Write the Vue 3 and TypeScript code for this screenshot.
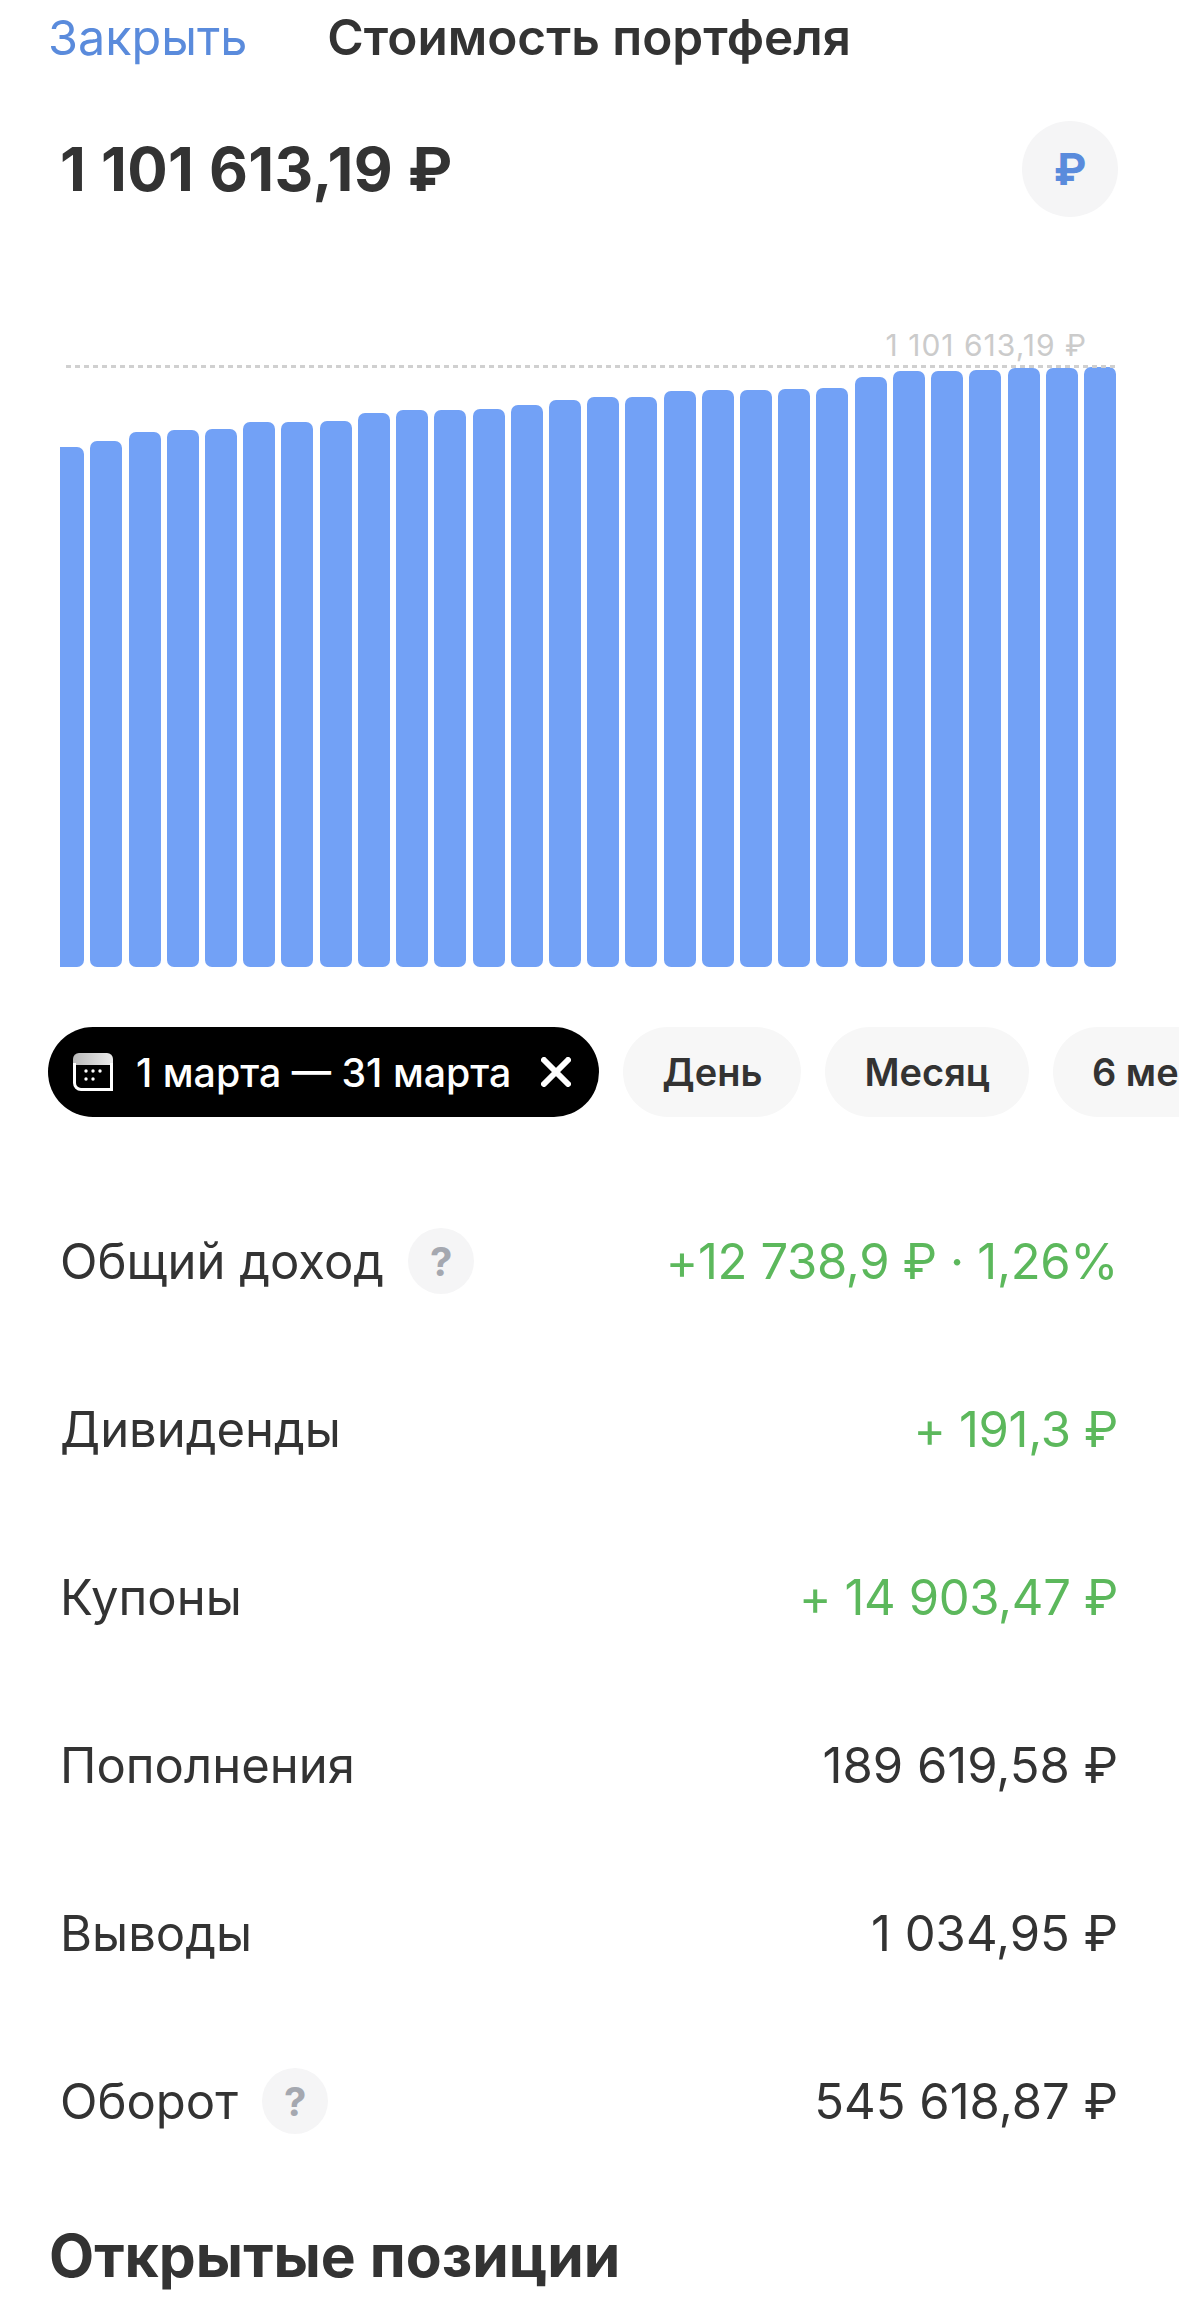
<script setup lang="ts">
type Row = { label: string; value: string; help?: boolean; positive?: boolean }

const CHART_BOTTOM = 967

// top edge of each bar, read off the chart
const barTops = [
  447, 441, 432, 430, 429, 422, 422, 421, 413, 410, 410, 409, 405, 400,
  397, 397, 391, 390, 390, 389, 388, 377, 371, 371, 370, 368, 368, 367,
]
const bars = barTops.map((top) => CHART_BOTTOM - top)

const rows: Row[] = [
  { label: 'Общий доход', value: '+12 738,9 ₽ · 1,26%', help: true, positive: true },
  { label: 'Дивиденды', value: '+ 191,3 ₽', positive: true },
  { label: 'Купоны', value: '+ 14 903,47 ₽', positive: true },
  { label: 'Пополнения', value: '189 619,58 ₽' },
  { label: 'Выводы', value: '1 034,95 ₽' },
  { label: 'Оборот', value: '545 618,87 ₽', help: true },
]

const periods = ['День', 'Месяц', '6 месяцев']
</script>

<template>
  <div class="page">
    <header class="topbar">
      <span class="close">Закрыть</span>
      <span class="title">Стоимость портфеля</span>
    </header>

    <div class="total">
      <span class="total-value">1 101 613,19 ₽</span>
      <span class="currency">₽</span>
    </div>

    <section class="chart">
      <div class="chart-label">1 101 613,19 ₽</div>
      <div class="chart-plot">
        <div class="chart-line"></div>
        <div class="bars">
          <div v-for="(h, i) in bars" :key="i" class="bar" :style="{ height: h + 'px' }"></div>
        </div>
      </div>
    </section>

    <div class="pills">
      <div class="pill pill-active">
        <svg class="cal" width="40" height="38" viewBox="0 0 40 38" fill="none">
          <defs>
            <linearGradient id="calTop" x1="0" y1="0" x2="1" y2="0">
              <stop offset="0" stop-color="#b9b9b9" />
              <stop offset="1" stop-color="#ececec" />
            </linearGradient>
          </defs>
          <path d="M6 0h28a6 6 0 0 1 6 6v6H0V6a6 6 0 0 1 6-6z" fill="url(#calTop)" />
          <path d="M1.5 10v20a6.5 6.5 0 0 0 6.5 6.5h30.5V10" stroke="#fff" stroke-width="3" />
          <g fill="#fff">
            <circle cx="13" cy="18" r="1.7" />
            <circle cx="20" cy="18" r="1.7" />
            <circle cx="27" cy="18" r="1.7" />
            <circle cx="13" cy="26" r="1.7" />
            <circle cx="20" cy="26" r="1.7" />
          </g>
        </svg>
        <span>1 марта — 31 марта</span>
        <svg class="cross" width="30" height="30" viewBox="0 0 30 30" fill="none">
          <path d="M3 3l24 24M27 3L3 27" stroke="#fff" stroke-width="6" stroke-linecap="round" />
        </svg>
      </div>
      <div v-for="p in periods" :key="p" class="pill">{{ p }}</div>
    </div>

    <div class="rows">
      <div v-for="row in rows" :key="row.label" class="row">
        <div class="row-label">
          <span>{{ row.label }}</span>
          <span v-if="row.help" class="help">?</span>
        </div>
        <span class="row-value" :class="{ positive: row.positive }">{{ row.value }}</span>
      </div>
    </div>

    <h2 class="positions">Открытые позиции</h2>
  </div>
</template>

<style>
html,
body {
  margin: 0;
  background: #fff;
  overflow: hidden;
}
</style>

<style scoped>
.page {
  width: 1179px;
  height: 2301px;
  overflow: hidden;
  background: #fff;
  color: #333;
  font-family: Inter, "Noto Sans", sans-serif;
  box-sizing: border-box;
}

.topbar {
  display: flex;
  align-items: center;
  gap: 80px;
  height: 74px;
  padding-left: 48px;
  white-space: nowrap;
}

.close {
  color: #5a8bdc;
  font-size: 48.5px;
}

.title {
  font-size: 49.5px;
  font-weight: 600;
}

.total {
  display: flex;
  align-items: center;
  justify-content: space-between;
  margin-top: 47px;
  padding: 0 61px 0 60px;
  height: 96px;
}

.total-value {
  font-size: 60px;
  font-weight: 700;
  letter-spacing: 0.4px;
}

.currency {
  display: flex;
  align-items: center;
  justify-content: center;
  width: 96px;
  height: 96px;
  border-radius: 50%;
  background: #f5f5f6;
  color: #5a8bdc;
  font-size: 44px;
  font-weight: 700;
}

.chart {
  margin: 113px 63px 0 60px;
}

.chart-label {
  height: 37px;
  padding-right: 29px;
  text-align: right;
  font-size: 30px;
  letter-spacing: 1px;
  line-height: 31px;
  color: #cbcbcb;
}

.chart-plot {
  position: relative;
  height: 600px;
}

.chart-line {
  position: absolute;
  top: -2px;
  left: 6px;
  right: 0;
  height: 3px;
  background: repeating-linear-gradient(90deg, #d0d0d0 0 5px, transparent 5px 9px);
  z-index: 1;
}

.bars {
  display: flex;
  align-items: flex-end;
  justify-content: flex-end;
  gap: 6.23px;
  height: 100%;
  overflow: hidden;
}

.bar {
  flex: 0 0 32px;
  border-radius: 7px;
  background: #72a1f6;
}

.pills {
  display: flex;
  gap: 24px;
  margin-top: 60px;
  padding-left: 48px;
  width: 1400px;
}

.pill {
  display: flex;
  align-items: center;
  height: 90px;
  padding: 0 39px;
  border-radius: 45px;
  background: #f7f7f7;
  font-size: 38px;
  font-weight: 600;
  white-space: nowrap;
}

.pill-active {
  padding: 0 28px 0 25px;
  background: #000;
  color: #fff;
  font-size: 39.3px;
  font-weight: 500;
}

.cal {
  margin-right: 23px;
}

.cross {
  margin-left: 30px;
}

.rows {
  margin-top: 60px;
  padding: 0 61px 0 60px;
}

.row {
  display: flex;
  align-items: center;
  justify-content: space-between;
  height: 168px;
  font-size: 49px;
  white-space: nowrap;
}

.row-label {
  display: flex;
  align-items: center;
  gap: 24px;
}

.row-value.positive {
  color: #5cb85c;
  letter-spacing: -0.35px;
}

.help {
  display: flex;
  align-items: center;
  justify-content: center;
  width: 66px;
  height: 66px;
  border-radius: 50%;
  background: #f5f5f6;
  color: #a5a8b0;
  font-size: 40px;
  font-weight: 700;
}

.positions {
  margin: 35px 0 0 49px;
  font-size: 58.7px;
  font-weight: 700;
  line-height: 72px;
  white-space: nowrap;
}
</style>
